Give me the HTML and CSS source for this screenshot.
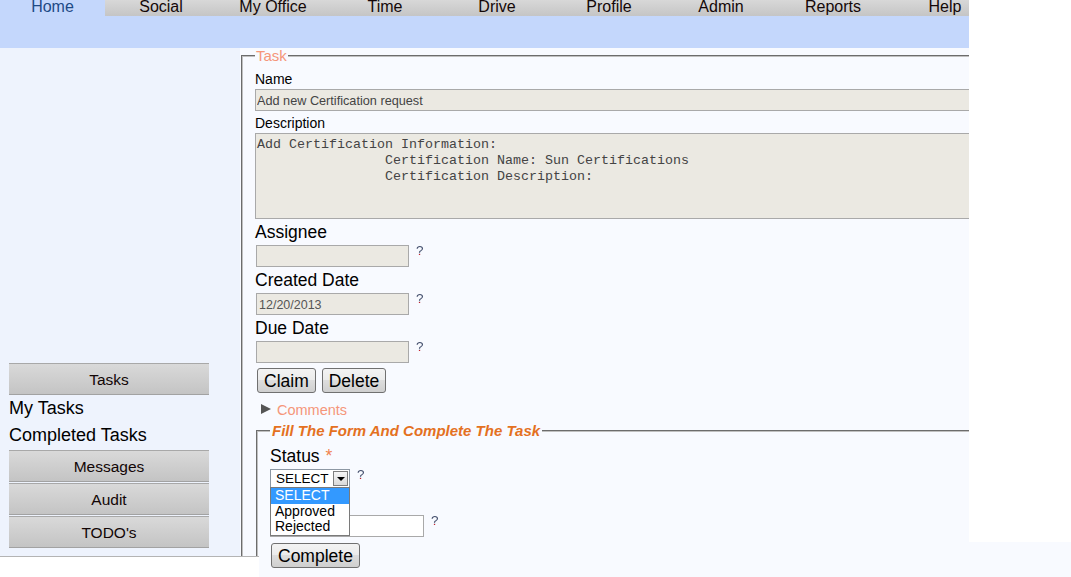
FILE: index.html
```html
<!DOCTYPE html>
<html>
<head>
<meta charset="utf-8">
<title>Task</title>
<link rel="stylesheet" href="styles.css">
</head>
<body>
<header class="header">
  <nav class="tabs">
    <span class="tab tab-home">Home</span>
    <span class="tab">Social</span>
    <span class="tab">My Office</span>
    <span class="tab">Time</span>
    <span class="tab">Drive</span>
    <span class="tab">Profile</span>
    <span class="tab">Admin</span>
    <span class="tab">Reports</span>
    <span class="tab">Help</span>
  </nav>
</header>
<div class="main">
  <aside class="sidebar">
    <div class="side-btn">Tasks</div>
    <div class="side-link">My Tasks</div>
    <div class="side-link">Completed Tasks</div>
    <div class="side-btn">Messages</div>
    <div class="side-btn">Audit</div>
    <div class="side-btn">TODO's</div>
  </aside>
  <section class="content">
    <fieldset class="task">
      <legend class="task-legend">Task</legend>
      <div class="lbl-sm lbl-name">Name</div>
      <input class="wide-input" type="text" readonly value="Add new Certification request">
      <div class="lbl-sm lbl-desc">Description</div>
      <textarea class="desc" readonly>Add Certification Information:
                Certification Name: Sun Certifications
                Certification Description: </textarea>
      <div class="lbl">Assignee</div>
      <div class="field-row">
        <input class="small-input" type="text" readonly value="">
        <span class="help">?</span>
      </div>
      <div class="lbl">Created Date</div>
      <div class="field-row">
        <input class="small-input" type="text" readonly value="12/20/2013">
        <span class="help">?</span>
      </div>
      <div class="lbl">Due Date</div>
      <div class="field-row">
        <input class="small-input" type="text" readonly value="">
        <span class="help">?</span>
      </div>
      <div class="btn-row">
        <button class="btn">Claim</button>
        <button class="btn">Delete</button>
      </div>
      <div class="comments">
        <span class="tri"></span>
        <span class="comments-text">Comments</span>
      </div>
      <fieldset class="complete-form">
        <legend class="form-legend">Fill The Form And Complete The Task</legend>
        <div class="lbl lbl-status">Status <span class="req">*</span></div>
        <div class="field-row select-row">
          <div class="select-wrap">
            <div class="select">
              <span class="select-text">SELECT</span>
              <span class="select-btn"><span class="select-arrow"></span></span>
            </div>
            <ul class="select-list">
              <li class="opt opt-active">SELECT</li>
              <li class="opt">Approved</li>
              <li class="opt">Rejected</li>
            </ul>
          </div>
          <span class="help">?</span>
        </div>
        <div class="spacer"></div>
        <div class="field-row remarks-row">
          <input class="plain-input" type="text" value="">
          <span class="help">?</span>
        </div>
      </fieldset>
    </fieldset>
  </section>
</div>
<div class="complete-row">
  <button class="btn">Complete</button>
</div>
</body>
</html>
```

FILE: styles.css
```css
html {
  overflow: hidden;
}

body {
  margin: 0;
  padding: 0;
  background: #ffffff;
  font-family: "Liberation Sans", Arial, sans-serif;
  color: #000;
}

/* ---------- header ---------- */
.header {
  width: 969px;
  height: 48px;
  background: #c4d7fc;
  overflow: hidden;
}

.tabs {
  display: flex;
  height: 16px;
  background: linear-gradient(#d8d8d8, #c5c5c5);
}

.tab {
  flex: 0 0 112px;
  text-align: center;
  font-size: 16px;
  line-height: 13px;
  height: 16px;
  color: #140808;
  white-space: nowrap;
}

.tab-home {
  flex-basis: 105px;
  background: #c4d7fc;
  color: #1e4a86;
}

/* ---------- main ---------- */
.main {
  display: flex;
  width: 969px;
  height: 508px;
  border-bottom: 1px solid #b4b4b4;
}

.sidebar {
  flex: none;
  width: 240px;
  box-sizing: border-box;
  background: #eef3fd;
  display: flex;
  flex-direction: column;
  justify-content: flex-end;
  padding: 0 0 8px 9px;
}

.side-btn {
  width: 200px;
  height: 32px;
  box-sizing: border-box;
  border-top: 1px solid #a8a8a8;
  border-bottom: 1px solid #a2a2a2;
  background: linear-gradient(#d9d9d9, #c4c4c4);
  text-align: center;
  font-size: 15.5px;
  line-height: 31px;
  color: #120606;
}

.side-btn + .side-btn,
.side-link + .side-btn {
  margin-top: 1px;
}

.side-link {
  font-size: 18px;
  line-height: 27px;
  color: #000;
}

.content {
  flex: 1;
  min-width: 0;
  background: #f8faff;
}

/* ---------- task fieldset ---------- */
.task {
  margin: 0 0 0 1px;
  padding: 0 0 0 12px;
  border: 2px groove #c0c0c0;
  border-right: 0;
  border-bottom: 0;
  height: 100%;
  box-sizing: border-box;
  min-width: 0;
}

.task-legend {
  padding: 0 1px;
  font-size: 15px;
  line-height: 15px;
  color: #f5967a;
}

.lbl-sm {
  font-size: 14px;
  line-height: 18px;
}

.lbl-name {
  margin-top: 7px;
}

.lbl-desc {
  margin-top: 3px;
}

.wide-input {
  display: block;
  width: 100%;
  height: 22px;
  box-sizing: border-box;
  margin: 1px 0 0 0;
  border: 1px solid #a9a9a9;
  border-right: 0;
  background: #ebe9e2;
  font-family: "Liberation Sans", Arial, sans-serif;
  font-size: 12.7px;
  color: #444;
  padding: 1px 1px 0;
  outline: none;
}

.desc {
  display: block;
  width: 100%;
  height: 86px;
  box-sizing: border-box;
  margin: 1px 0 0 0;
  border: 1px solid #a9a9a9;
  border-right: 0;
  background: #ebe9e2;
  font-family: "Liberation Mono", "Courier New", monospace;
  font-size: 13.33px;
  line-height: 16px;
  color: #444;
  padding: 3px 1px 0;
  resize: none;
  overflow: hidden;
  outline: none;
}

.lbl {
  font-size: 17.5px;
  line-height: 20px;
  margin-top: 3px;
}

.field-row {
  display: flex;
  align-items: flex-start;
  gap: 7px;
  margin-top: 3px;
}

.small-input {
  width: 153px;
  height: 22px;
  box-sizing: border-box;
  margin: 0 0 0 1px;
  border: 1px solid #a9a9a9;
  background: #ebe9e2;
  font-family: "Liberation Sans", Arial, sans-serif;
  font-size: 12.5px;
  color: #555;
  padding: 1px 2px 0;
  outline: none;
}

.help {
  font-size: 13.5px;
  line-height: 12px;
  background: linear-gradient(#3e4968 72%, #c4202c 72%);
  -webkit-background-clip: text;
  background-clip: text;
  color: transparent;
}

.btn-row {
  display: flex;
  gap: 6px;
  margin: 5px 0 0 2px;
}

.btn {
  height: 25px;
  box-sizing: border-box;
  padding: 0 6px;
  border: 1px solid #707070;
  border-radius: 3px;
  background: linear-gradient(#f3f3f3, #ebebeb 50%, #dddddd 50%, #cfcfcf);
  font-family: "Liberation Sans", Arial, sans-serif;
  font-size: 17.5px;
  line-height: 22px;
  color: #000;
}

.comments {
  display: flex;
  align-items: center;
  height: 18px;
  margin: 8px 0 0 6px;
}

.tri {
  width: 0;
  height: 0;
  border-left: 10px solid #555;
  border-top: 5px solid transparent;
  border-bottom: 5px solid transparent;
  margin-top: -2px;
}

.comments-text {
  margin-left: 6px;
  font-size: 14.5px;
  line-height: 18px;
  color: #f5967a;
}

/* ---------- inner fieldset ---------- */
.complete-form {
  margin: 4px 0 0 1px;
  padding: 0 0 0 12px;
  border: 2px groove #c0c0c0;
  border-right: 0;
  border-bottom: 0;
  height: 133px;
  box-sizing: border-box;
  min-width: 0;
}

.form-legend {
  padding: 0 2px;
  font-size: 15px;
  line-height: 16px;
  font-weight: bold;
  font-style: italic;
  color: #e4711f;
}

.lbl-status {
  margin-top: 7px;
}

.req {
  margin-left: 1px;
  color: #f0824f;
}

.select-row {
  margin-top: 3px;
}

.select-wrap {
  position: relative;
  width: 80px;
}

.select {
  display: flex;
  align-items: center;
  justify-content: space-between;
  height: 19px;
  box-sizing: border-box;
  border: 1px solid #8c97a3;
  background: #fff;
}

.select-text {
  padding-left: 5px;
  font-size: 13.5px;
  line-height: 17px;
  color: #000;
}

.select-btn {
  display: flex;
  align-items: center;
  justify-content: center;
  width: 15px;
  height: 15px;
  box-sizing: border-box;
  margin-right: 1px;
  border: 1px solid #7e7e7e;
  background: linear-gradient(#f6f6f6, #d9d9d9);
}

.select-arrow {
  width: 0;
  height: 0;
  border-top: 4px solid #000;
  border-left: 4px solid transparent;
  border-right: 4px solid transparent;
  margin-top: 1px;
}

.select-list {
  position: absolute;
  top: 18px;
  left: 0;
  z-index: 2;
  width: 80px;
  box-sizing: border-box;
  margin: 0;
  padding: 0;
  list-style: none;
  border: 1px solid #7a7a7a;
  background: #fff;
}

.opt {
  font-size: 14px;
  line-height: 15.7px;
  padding-left: 4px;
  color: #000;
}

.opt-active {
  background: #3399ff;
  color: #fff;
}

.spacer {
  height: 24px;
}

.remarks-row {
  margin-top: 3px;
}

.plain-input {
  width: 154px;
  height: 22px;
  box-sizing: border-box;
  margin: 0;
  border: 1px solid #a9a9a9;
  background: #fff;
  font-family: "Liberation Sans", Arial, sans-serif;
  font-size: 12px;
  padding: 0 3px;
  outline: none;
}

/* the form's last row spills past the page frame */
.complete-row {
  width: calc(100vw - 259px);
  height: 35px;
  box-sizing: border-box;
  margin: -15px 0 0 259px;
  padding: 1px 0 0 12px;
  background: #f8faff;
}
```
